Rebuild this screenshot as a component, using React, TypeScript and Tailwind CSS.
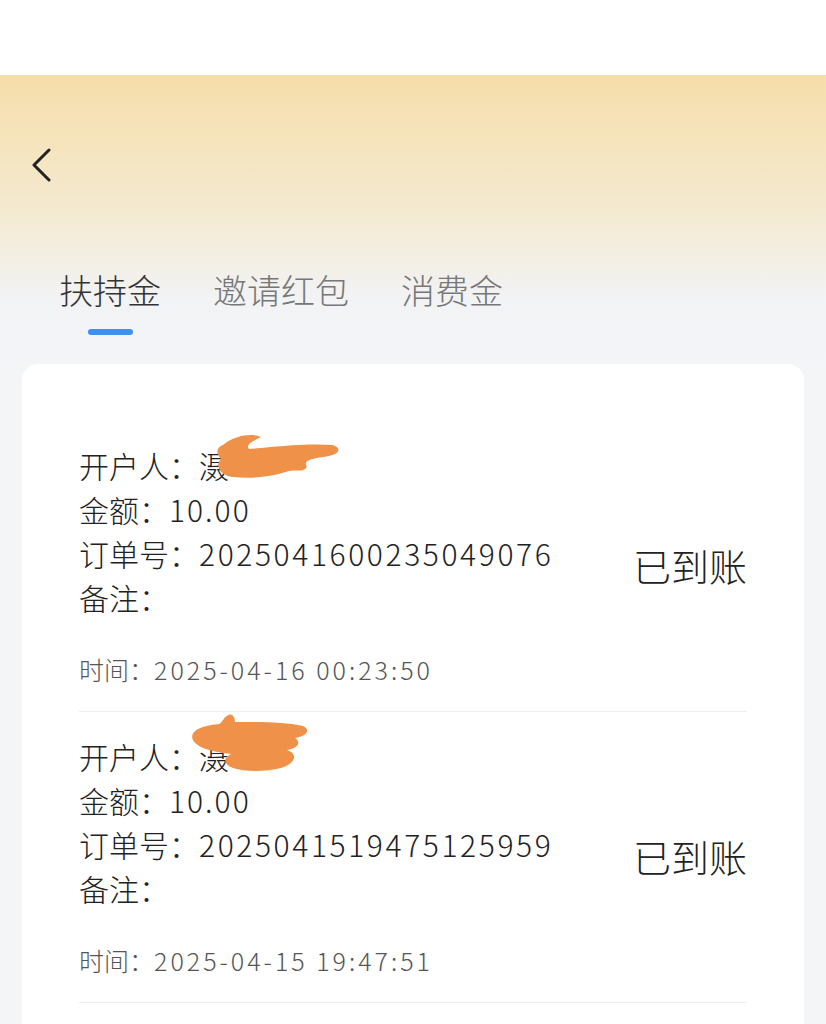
import React from 'react';

type Record = {
  name: string;
  amount: string;
  orderNo: string;
  note: string;
  time: string;
  status: string;
};

const records: Record[] = [
  { name: '滠', amount: '10.00', orderNo: '2025041600235049076', note: '', time: '2025-04-16 00:23:50', status: '已到账' },
  { name: '滠', amount: '10.00', orderNo: '2025041519475125959', note: '', time: '2025-04-15 19:47:51', status: '已到账' },
];

const tabs = ['扶持金', '邀请红包', '消费金'];

const Scribble: React.FC<{ variant: number }> = ({ variant }) =>
  variant === 1 ? (
    <svg className="absolute left-[110px] top-[-22px]" width="120" height="70" viewBox="0 0 120 70">
      <path
        d="M38 4 C42 0 46 4 46 10 C70 10 96 10 114 14 C122 18 118 24 106 26 C112 30 110 36 98 38 C110 42 106 52 92 56 C76 60 56 60 44 56 C34 52 34 46 42 42 C24 40 8 36 4 28 C0 20 10 14 30 12 C34 10 34 6 38 4 Z"
        fill="#f0914a"
      />
    </svg>
  ) : (
    <svg className="absolute left-[134px] top-[-12px]" width="130" height="60" viewBox="0 0 130 60">
      <path
        d="M10 14 C22 4 40 2 48 6 C40 10 32 14 36 18 C60 16 92 12 120 14 C130 18 126 24 110 26 C96 28 90 30 94 36 C90 42 82 38 76 40 C58 46 38 48 20 46 C6 44 2 34 8 28 C2 22 4 16 10 14 Z"
        fill="#f0914a"
      />
    </svg>
  );

const RecordItem: React.FC<{ r: Record; i: number }> = ({ r, i }) => (
  <div className="flex items-center justify-between border-b border-[#eeeeee] pt-[22px] pb-[24px]">
    <div className="flex flex-col">
      <div className="text-[30px] font-light leading-[44px] text-[#222]">
        <div className="relative">
          开户人：<span>{r.name}</span>
          <Scribble variant={i} />
        </div>
        <div>
          金额：<span className="tracking-[2px]">{r.amount}</span>
        </div>
        <div>
          订单号：<span className="tracking-[2.6px]">{r.orderNo}</span>
        </div>
        <div>备注：{r.note}</div>
      </div>
      <div className="mt-[32px] text-[25px] font-light leading-[36px] text-[#555]">
        时间：<span className="tracking-[3px]">{r.time}</span>
      </div>
    </div>
    <div className="text-[38px] font-light leading-[50px] text-[#222]">{r.status}</div>
  </div>
);

export default function App() {
  return (
    <div
      className="h-[1024px] w-[826px] overflow-hidden bg-[#f4f5f7]"
      style={{ fontFamily: '"Noto Sans CJK SC", "Noto Sans", sans-serif' }}
    >
      <div className="h-[75px] bg-white" />
      <div className="h-[289px] bg-[linear-gradient(180deg,#f6deaa_0%,#f4e9cf_45%,#f2f3f5_78%,#f3f5f9_100%)]">
        <div className="pl-[30px] pt-[73px]">
          <svg width="22" height="34" viewBox="0 0 22 34" fill="none">
            <path d="M19 2 L4 17 L19 32" stroke="#222" strokeWidth="3" strokeLinecap="round" strokeLinejoin="round" />
          </svg>
        </div>
        <div className="mt-[88px] flex gap-[52px] pl-[59px]">
          {tabs.map((t, idx) => (
            <div key={t} className="flex flex-col items-center">
              <div className={`text-[34px] font-light leading-[40px] ${idx === 0 ? 'text-[#333]' : 'text-[#777]'}`}>{t}</div>
              <div className={`mt-[19px] h-[6px] w-[45px] rounded-full ${idx === 0 ? 'bg-[#3d8ff0]' : 'bg-transparent'}`} />
            </div>
          ))}
        </div>
      </div>
      <div className="mx-[22px] min-h-[720px] rounded-[16px] bg-white px-[57px] pt-[57px]">
        {records.map((r, i) => (
          <RecordItem key={r.orderNo} r={r} i={i} />
        ))}
      </div>
    </div>
  );
}
